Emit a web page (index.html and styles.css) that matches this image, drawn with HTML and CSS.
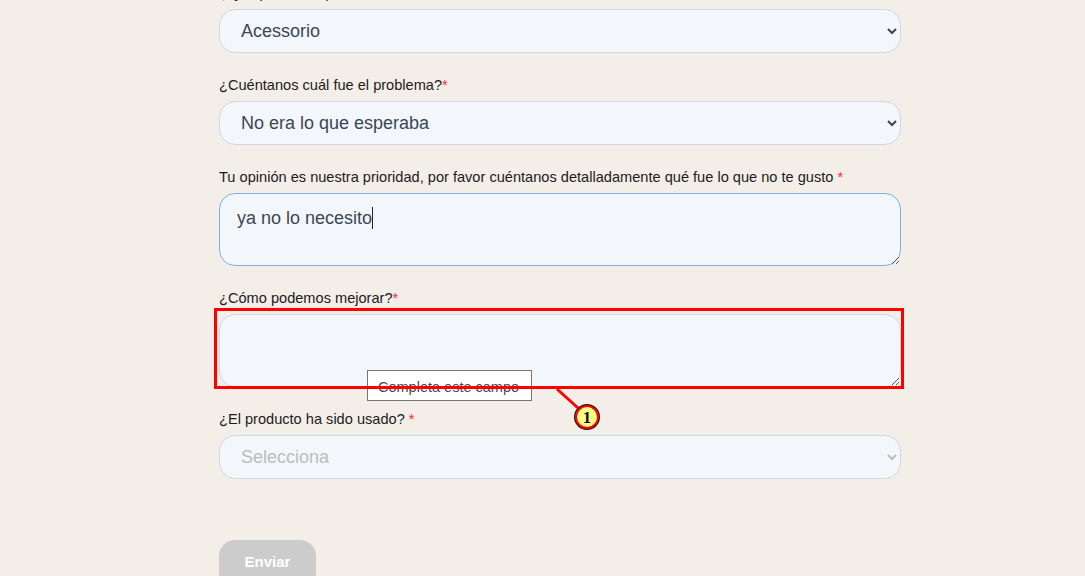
FILE: index.html
```html
<!DOCTYPE html>
<html>
  <head>
    <title>Devoluciones</title>
    <link rel="stylesheet" href="styles.css">
  </head>
  <body>
    <div class="form">
      <div class="field">
        <label for="tipo">¿Qué producto quieres devolver?<span class="req">*</span></label>
        <select id="tipo" class="control">
          <option>Acessorio</option>
        </select>
      </div>
      <div class="field">
        <label for="problema">¿Cuéntanos cuál fue el problema?<span class="req">*</span></label>
        <select id="problema" class="control">
          <option>No era lo que esperaba</option>
        </select>
      </div>
      <div class="field">
        <label for="opinion">Tu opinión es nuestra prioridad, por favor cuéntanos detalladamente qué fue lo que no te gusto <span class="req">*</span></label>
        <div class="typing">
          <textarea id="opinion" class="control area focused">ya no lo necesito</textarea>
          <span class="caret"></span>
        </div>
      </div>
      <div class="field">
        <label for="mejorar">¿Cómo podemos mejorar?<span class="req">*</span></label>
        <div class="target">
          <textarea id="mejorar" class="control area"></textarea>
          <div class="tooltip">Completa este campo</div>
          <div class="marker"></div>
          <svg class="callout" width="60" height="50" viewBox="0 0 60 50">
            <line x1="8" y1="5" x2="29" y2="24" stroke="#ff0000" stroke-width="3"/>
            <circle cx="38" cy="33" r="13" fill="#1a1a1a"/>
            <circle cx="38" cy="33" r="12" fill="#ff0000"/>
            <circle cx="38" cy="33" r="10" fill="#ffff88"/>
            <text x="38" y="39" text-anchor="middle" font-family="Liberation Serif, serif" font-weight="bold" font-size="17" fill="#111">1</text>
          </svg>
        </div>
      </div>
      <div class="field">
        <label for="usado">¿El producto ha sido usado? <span class="req">*</span></label>
        <select id="usado" class="control empty">
          <option>Selecciona</option>
        </select>
      </div>
      <button class="send" disabled>Enviar</button>
    </div>
  </body>
</html>
```

FILE: styles.css
```css
body {
  margin: 0;
  background-color: #f3eee8;
  font-family: "Liberation Sans", Arial, sans-serif;
  overflow: hidden;
}

.form {
  width: 682px;
  margin: -16px auto 0 219px;
}

.field {
  margin-bottom: 23px;
}

label {
  display: block;
  font-size: 14.6px;
  line-height: 17px;
  color: #1c1c1c;
  padding-top: 1px;
  margin-bottom: 7px;
}

.req {
  color: #ff2a2a;
}

.control {
  display: block;
  width: 100%;
  box-sizing: border-box;
  background-color: #f3f6fa;
  border: 1px solid #cfd9e5;
  border-radius: 16px;
  font-family: "Liberation Sans", Arial, sans-serif;
  font-size: 18px;
  color: #3a4756;
}

select.control {
  height: 44px;
  padding: 0 15px 0 17px;
}

select.empty {
  color: #bdbdbd;
}

.area {
  height: 73px;
  padding: 14px 17px 10px;
  resize: vertical;
  outline: none;
}

.area.focused {
  border-color: #78b4e6;
}

.typing {
  position: relative;
}

/* text cursor after the typed answer */
.caret {
  position: absolute;
  left: 153px;
  top: 14px;
  width: 1px;
  height: 22px;
  background: #222;
}

.target {
  position: relative;
  margin-top: 1px;
}

.tooltip {
  position: absolute;
  left: 148px;
  top: 56px;
  width: 165px;
  height: 31px;
  box-sizing: border-box;
  padding: 8px 10px 0;
  background: #fff;
  border: 1px solid #767676;
  font-size: 14.5px;
  color: #4a4a4a;
  white-space: nowrap;
}

.marker {
  position: absolute;
  left: -5px;
  top: -6px;
  width: 690px;
  height: 81px;
  box-sizing: border-box;
  border: 3px solid #ff0000;
}

.callout {
  position: absolute;
  left: 330px;
  top: 70px;
}

.send {
  display: block;
  margin-top: 61px;
  width: 97px;
  height: 50px;
  border: none;
  border-radius: 16px;
  background-color: #cccccc;
  color: #fff;
  font-family: "Liberation Sans", Arial, sans-serif;
  font-weight: bold;
  font-size: 15px;
  padding-bottom: 9px;
}
```
